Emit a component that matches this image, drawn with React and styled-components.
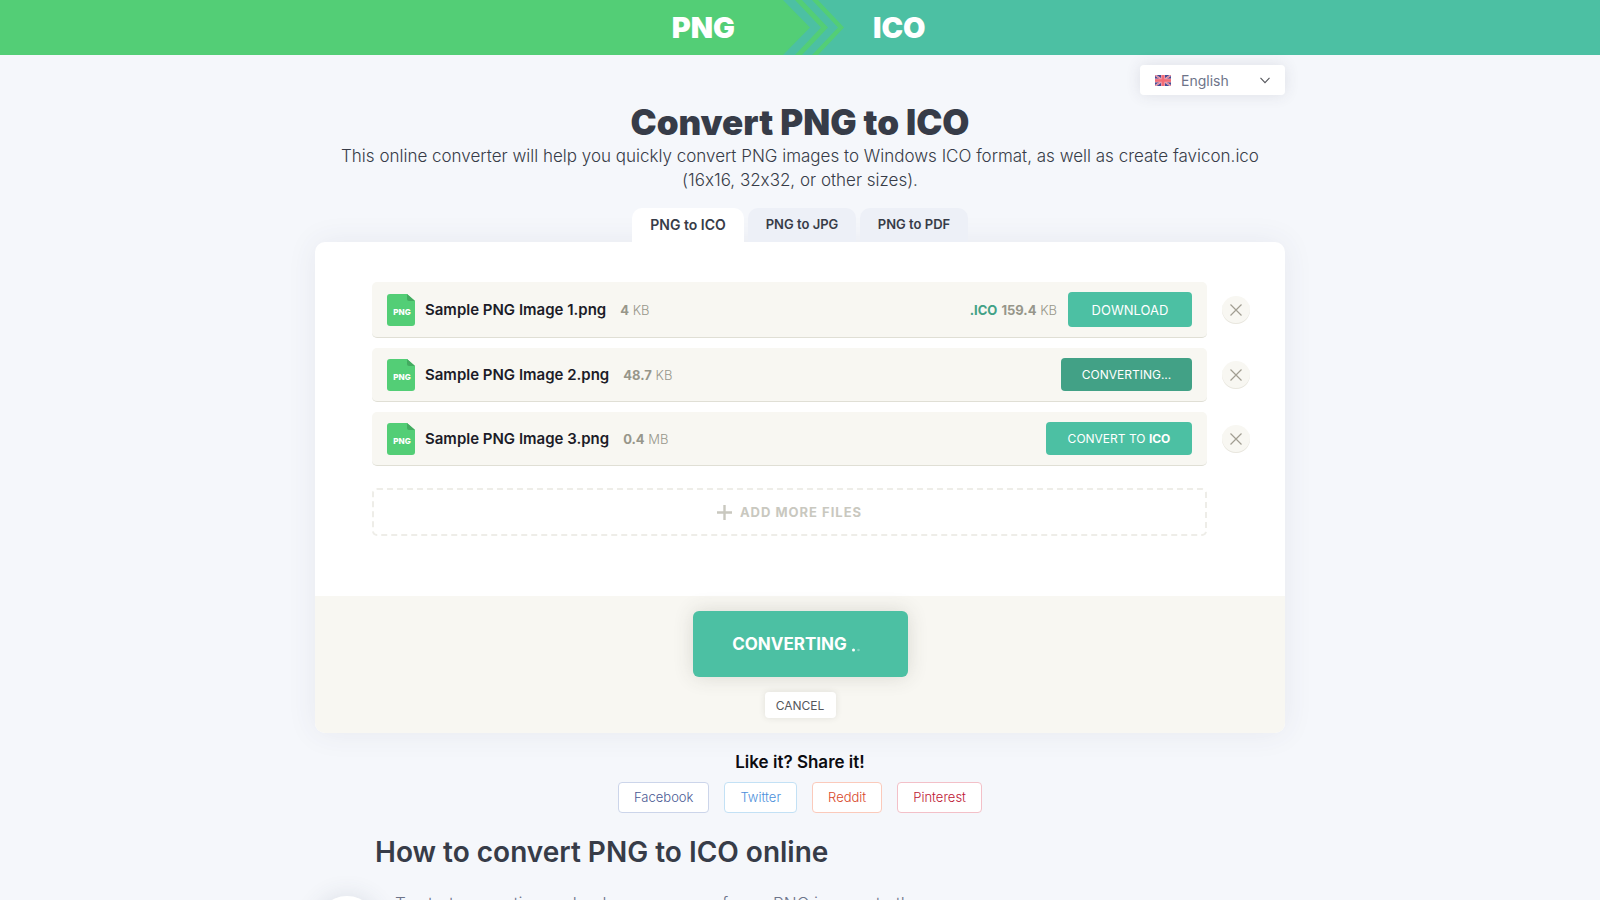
import React from "react";
import styled, { createGlobalStyle, css } from "styled-components";

const GlobalStyle = createGlobalStyle`
  * { box-sizing: border-box; }
  html { overflow: hidden; }
  body {
    margin: 0;
    background: #f5f7fb;
    color: #373c48;
    font-family: Inter, "Open Sans", sans-serif;
    font-size: 16px;
    font-variant-ligatures: no-contextual;
  }
  button, select { font-family: inherit; margin: 0; }
  button { cursor: pointer; border: 0; }
`;

const Banner = styled.header`
  display: flex;
  height: 55px;
  background: #4cc0a3;
  color: #fff;
  font-size: 29px;
  font-weight: 900;
  line-height: 55px;
`;
const BannerFrom = styled.div`
  width: calc(50% - 20px);
  padding-right: 45px;
  background: #53ce76;
  text-align: right;
`;
const BannerTo = styled.div`
  flex: 1;
  padding-left: 28px;
`;
const Chevrons = styled.svg`
  flex: none;
  display: block;
`;

const Page = styled.main`
  width: 100%;
  max-width: 970px;
  margin: 0 auto;
`;

const LanguageBar = styled.div`
  display: flex;
  justify-content: flex-end;
  padding-top: 10px;
`;
const LanguageBox = styled.label`
  display: flex;
  align-items: center;
  width: 145px;
  height: 30px;
  padding: 0 15px;
  border-radius: 4px;
  background: #fff;
  box-shadow: 0 0 15px rgba(60, 60, 80, 0.12);
`;
const LanguageSelect = styled.select`
  flex: 1;
  appearance: none;
  border: 0;
  margin-left: 10px;
  padding: 0;
  background: none;
  color: #6d7489;
  font-size: 14px;
  outline: none;
`;

const Title = styled.h1`
  margin: 6px 0 0;
  font-size: 35px;
  font-weight: 900;
  line-height: 43px;
  text-align: center;
`;
const Lead = styled.p`
  margin: 0;
  padding: 0 20px;
  font-size: 17px;
  font-weight: 300;
  line-height: 24px;
  text-align: center;
`;

const Tabs = styled.nav`
  display: flex;
  justify-content: center;
  gap: 4px;
  margin-top: 16px;
`;
const Tab = styled.a`
  min-width: 108px;
  height: 34px;
  border-radius: 10px 10px 0 0;
  background: #edf0f7;
  color: #373c48;
  font-size: 13px;
  font-weight: 600;
  line-height: 32px;
  text-align: center;
  text-decoration: none;
  ${(p) => p.$active && css`
    position: relative;
    z-index: 1;
    min-width: 112px;
    background: #fff;
    font-size: 14px;
    line-height: 34px;
  `}
`;

const Panel = styled.section`
  border-radius: 10px;
  background: #fff;
  box-shadow: 0 0 30px rgba(60, 70, 100, 0.08);
`;
const PanelBody = styled.div`
  padding: 40px 35px 60px 57px;
`;
const FileList = styled.ul`
  display: grid;
  gap: 10px;
  margin: 0;
  padding: 0;
  list-style: none;
`;
const FileItem = styled.li`
  display: flex;
  align-items: center;
  gap: 15px;
`;
const FileCard = styled.div`
  flex: 1;
  display: flex;
  align-items: center;
  padding: 10px 15px;
  border-bottom: 1px solid #e0dfd5;
  border-radius: 5px;
  background: #f8f7f2;
`;
const FileName = styled.span`
  margin: 0 14px 0 10px;
  color: #1c1c28;
  font-size: 15px;
  font-weight: 600;
`;
const Size = styled.span`
  color: #97968a;
  font-size: 13px;
  font-weight: 300;
  b { font-weight: 700; }
`;
const Result = styled.span`
  display: flex;
  align-items: center;
  gap: 4px;
  margin-right: 11px;
  font-size: 13px;
  font-weight: 700;
  color: #42a186;
`;
const Spacer = styled.span`
  flex: 1;
`;
const actionKinds = {
  download: css`min-width: 124px; height: 35px; background: #4cc0a3; font-size: 13px;`,
  converting: css`min-width: 131px; height: 33px; background: #42a186;`,
  convert: css`min-width: 146px; height: 33px; background: #4cc0a3;`,
};
const Action = styled.button`
  padding: 0 10px;
  border-radius: 4px;
  color: #fff;
  font-size: 12px;
  ${(p) => actionKinds[p.$kind]}
`;
const RemoveButton = styled.button`
  display: grid;
  place-items: center;
  width: 28px;
  height: 28px;
  padding: 0;
  border-radius: 50%;
  background: #f8f7f2;
  box-shadow: inset 0 -1px 0 #e8e6de;
`;
const AddButton = styled.button`
  display: flex;
  align-items: center;
  justify-content: center;
  gap: 8px;
  width: calc(100% - 43px);
  height: 48px;
  margin-top: 22px;
  border: 2px dashed #eeede8;
  border-radius: 5px;
  background: none;
  color: #c9c8bf;
  font-size: 13px;
  font-weight: 700;
  letter-spacing: 1px;
`;

const PanelFooter = styled.footer`
  display: flex;
  flex-direction: column;
  align-items: center;
  gap: 15px;
  padding: 15px;
  border-radius: 0 0 10px 10px;
  background: #f8f7f2;
`;
const MainButton = styled.button`
  display: flex;
  align-items: center;
  justify-content: center;
  gap: 5px;
  min-width: 215px;
  height: 66px;
  border-radius: 6px;
  background: #4cc0a3;
  box-shadow: 0 0 20px rgba(60, 60, 50, 0.16);
  color: #fff;
  font-size: 17px;
  font-weight: 700;
`;
const CancelButton = styled.button`
  min-width: 71px;
  height: 26px;
  padding: 0 8px;
  border-radius: 4px;
  background: #fff;
  box-shadow: 0 0 6px rgba(60, 60, 50, 0.12);
  color: #55565c;
  font-size: 12px;
`;

const Share = styled.section`
  text-align: center;
`;
const ShareTitle = styled.h3`
  margin: 17px 0 8px;
  color: #0c0c10;
  font-size: 17px;
  font-weight: 600;
  line-height: 24px;
`;
const ShareLinks = styled.div`
  display: flex;
  justify-content: center;
  gap: 15px;
`;
const ShareLink = styled.a`
  height: 31px;
  padding: 0 15px;
  border: 1px solid ${(p) => p.$border};
  border-radius: 4px;
  background: #fff;
  color: ${(p) => p.$color};
  font-size: 13px;
  font-weight: 300;
  line-height: 29px;
  text-decoration: none;
`;

const HowTitle = styled.h2`
  margin: 20px 0 0 60px;
  font-size: 28px;
  font-weight: 600;
  line-height: 38px;
`;
const Step = styled.div`
  display: flex;
  gap: 16px;
  margin-top: 21px;
`;
const StepNumber = styled.span`
  flex: none;
  display: grid;
  place-items: center;
  width: 64px;
  height: 64px;
  margin-top: 4px;
  border-radius: 50%;
  background: #fff;
  box-shadow: 0 0 25px rgba(60, 70, 100, 0.14);
`;
const StepText = styled.p`
  margin: 0;
  color: #6d7489;
  font-size: 17px;
  font-weight: 300;
  line-height: 24px;
`;

const FlagIcon = () => (
  <svg width="16" height="11" viewBox="0 0 16 11" aria-hidden="true">
    <rect width="16" height="11" fill="#454b94" />
    <path d="M0 0L16 11M16 0L0 11" stroke="#e9b9c8" strokeWidth="1.8" />
    <path d="M0 0L16 11M16 0L0 11" stroke="#e27486" strokeWidth="0.8" />
    <path d="M8 0V11M0 5.5H16" stroke="#eba4b4" strokeWidth="4" />
    <path d="M8 0V11M0 5.5H16" stroke="#f26c76" strokeWidth="2.6" />
  </svg>
);
const ArrowIcon = () => (
  <svg width="10" height="7" viewBox="0 0 10 7" fill="none" stroke="#55565c" aria-hidden="true">
    <path d="M0.5 0.8L5 5.6L9.5 0.8" strokeWidth="1.1" />
  </svg>
);
const FileIcon = () => (
  <svg width="28" height="32" viewBox="0 0 28 32" aria-hidden="true">
    <path d="M3 0H20L28 7V29Q28 32 25 32H3Q0 32 0 29V3Q0 0 3 0Z" fill="#53ce76" />
    <path d="M20 0L28 7H22Q20 7 20 5Z" fill="#43ab60" />
    <text x="15" y="21" textAnchor="middle" fontSize="8" fontWeight="800" fill="#fff">PNG</text>
  </svg>
);
const CrossIcon = () => (
  <svg width="12" height="12" viewBox="0 0 12 12" stroke="#a19e92" strokeWidth="1.2" aria-hidden="true">
    <path d="M0.5 0.5L11.5 11.5M11.5 0.5L0.5 11.5" />
  </svg>
);
const PlusIcon = () => (
  <svg width="15" height="15" viewBox="0 0 15 15" stroke="#c9c8bf" strokeWidth="2.4" aria-hidden="true">
    <path d="M7.5 0V15M0 7.5H15" />
  </svg>
);
const DotsIcon = () => (
  <svg width="16" height="16" viewBox="0 0 16 16" fill="#fff" aria-hidden="true">
    <circle cx="1.5" cy="14" r="1.5" />
    <circle cx="6.5" cy="14" r="1.3" opacity="0.3" />
  </svg>
);

const files = [
  { name: "Sample PNG Image 1.png", size: "4", unit: "KB", kind: "download" },
  { name: "Sample PNG Image 2.png", size: "48.7", unit: "KB", kind: "converting" },
  { name: "Sample PNG Image 3.png", size: "0.4", unit: "MB", kind: "convert" },
];
const labels = {
  download: "DOWNLOAD",
  converting: "CONVERTING...",
  convert: <>CONVERT TO <b>ICO</b></>,
};
const networks = [
  ["Facebook", "#4a5a94", "#ccd5ea"],
  ["Twitter", "#4c8fdb", "#c3e1f5"],
  ["Reddit", "#d9482b", "#fbcabb"],
  ["Pinterest", "#bd1533", "#f3c0c8"],
];

export default function App() {
  return (
    <>
      <GlobalStyle />
      <Banner>
        <BannerFrom>PNG</BannerFrom>
        <Chevrons width="65" height="55" viewBox="0 0 65 55" fill="#53ce76" aria-hidden="true">
          <path d="M0 0H3L30 27.5L3 55H0Z" />
          <path d="M15 0H22L48 27.5L22 55H15L41 27.5Z" />
          <path d="M32 0H38L64 27.5L38 55H32L58 27.5Z" />
        </Chevrons>
        <BannerTo>ICO</BannerTo>
      </Banner>
      <Page>
        <LanguageBar>
          <LanguageBox>
            <FlagIcon />
            <LanguageSelect aria-label="Language" defaultValue="English">
              <option>English</option>
            </LanguageSelect>
            <ArrowIcon />
          </LanguageBox>
        </LanguageBar>
        <Title>Convert PNG to ICO</Title>
        <Lead>
          This online converter will help you quickly convert PNG images to Windows ICO format, as
          well as create favicon.ico (16x16, 32x32, or other sizes).
        </Lead>
        <Tabs>
          <Tab href="#ico" $active>PNG to ICO</Tab>
          <Tab href="#jpg">PNG to JPG</Tab>
          <Tab href="#pdf">PNG to PDF</Tab>
        </Tabs>
        <Panel>
          <PanelBody>
            <FileList>
              {files.map((f) => (
                <FileItem key={f.name}>
                  <FileCard>
                    <FileIcon />
                    <FileName>{f.name}</FileName>
                    <Size><b>{f.size}</b> {f.unit}</Size>
                    <Spacer />
                    {f.kind === "download" && (
                      <Result>.ICO <Size><b>159.4</b> KB</Size></Result>
                    )}
                    <Action type="button" $kind={f.kind}>{labels[f.kind]}</Action>
                  </FileCard>
                  <RemoveButton type="button" aria-label={`Remove ${f.name}`}><CrossIcon /></RemoveButton>
                </FileItem>
              ))}
            </FileList>
            <AddButton type="button"><PlusIcon />ADD MORE FILES</AddButton>
          </PanelBody>
          <PanelFooter>
            <MainButton type="button">CONVERTING<DotsIcon /></MainButton>
            <CancelButton type="button">CANCEL</CancelButton>
          </PanelFooter>
        </Panel>
        <Share>
          <ShareTitle>Like it? Share it!</ShareTitle>
          <ShareLinks>
            {networks.map(([name, color, border]) => (
              <ShareLink key={name} href={`#${name}`} $color={color} $border={border}>{name}</ShareLink>
            ))}
          </ShareLinks>
        </Share>
        <HowTitle>How to convert PNG to ICO online</HowTitle>
        <Step>
          <StepNumber />
          <StepText>To start converting, upload one or more of your PNG images to the</StepText>
        </Step>
      </Page>
    </>
  );
}
